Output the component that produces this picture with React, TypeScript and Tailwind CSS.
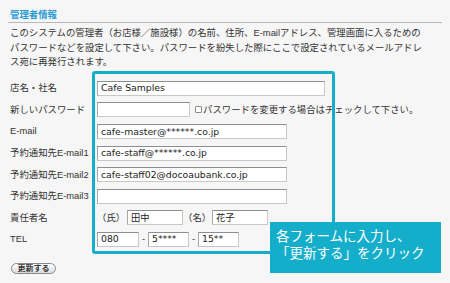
import React from "react";

const JP = "font-['Liberation_Sans','Noto_Sans_CJK_JP',sans-serif]";

function Field({ w, value = "" }: { w: string; value?: string }) {
  return (
    <div
      className={`${w} h-[15px] bg-white border border-[#c8c8c8] border-t-[#8e8e8e] border-l-[#a8a8a8] flex items-center pl-[3px] text-[9.3px] text-[#222] whitespace-nowrap overflow-hidden font-['DejaVu_Sans','Noto_Sans_CJK_JP',sans-serif]`}
    >
      {value}
    </div>
  );
}

function Row({ label, children }: { label: string; children: React.ReactNode }) {
  return (
    <div className="flex items-center h-[21.6px]">
      <div className="w-[87px] shrink-0 whitespace-nowrap">{label}</div>
      <div className="flex items-center">{children}</div>
    </div>
  );
}

export default function App() {
  return (
    <div className={`relative w-[450px] h-[283px] overflow-hidden bg-[#f6f6f6] text-[#333] text-[9.4px] ${JP}`}>
      {/* Header */}
      <h2 className="pl-[10px] pt-[9px] leading-[12px] font-bold text-[#2a9bd4]">管理者情報</h2>
      <div className="mx-[8px] mt-[1px] h-px bg-[#b8b8b8]" />

      <p className="px-[10px] pt-[3px] leading-[14.5px] whitespace-nowrap">
        このシステムの管理者（お店様／施設様）の名前、住所、E-mailアドレス、管理画面に入るための
        <br />
        パスワードなどを設定して下さい。パスワードを紛失した際にここで設定されているメールアドレ
        <br />
        ス宛に再発行されます。
      </p>

      {/* Form */}
      <div className="pl-[10px] mt-[8px]">
        <Row label="店名・社名">
          <Field w="w-[228px]" value="Cafe Samples" />
        </Row>
        <Row label="新しいパスワード">
          <Field w="w-[93px]" />
          <span className="ml-[5px] w-[7px] h-[7px] border border-[#888] bg-white rounded-[1px]" />
          <span className="ml-[1px] whitespace-nowrap">パスワードを変更する場合はチェックして下さい。</span>
        </Row>
        <Row label="E-mail">
          <Field w="w-[190px]" value="cafe-master@******.co.jp" />
        </Row>
        <Row label="予約通知先E-mail1">
          <Field w="w-[190px]" value="cafe-staff@******.co.jp" />
        </Row>
        <Row label="予約通知先E-mail2">
          <Field w="w-[190px]" value="cafe-staff02@docoaubank.co.jp" />
        </Row>
        <Row label="予約通知先E-mail3">
          <Field w="w-[190px]" />
        </Row>
        <Row label="責任者名">
          <span className="w-[30px] whitespace-nowrap">（氏）</span>
          <Field w="w-[56px]" value="田中" />
          <span className="w-[29px] whitespace-nowrap">（名）</span>
          <Field w="w-[56px]" value="花子" />
        </Row>
        <Row label="TEL">
          <Field w="w-[42px]" value="080" />
          <span className="w-[9px] text-center">-</span>
          <Field w="w-[41px]" value="5****" />
          <span className="w-[9px] text-center">-</span>
          <Field w="w-[41px]" value="15**" />
        </Row>
      </div>

      <div className="pl-[11px] mt-[11px]">
        <button className="h-[11px] w-[45px] rounded-full border border-[#8a8a8a] bg-gradient-to-b from-white to-[#dcdcdc] text-[8px] leading-[9px] font-bold text-[#333]">
          更新する
        </button>
      </div>

      {/* Annotation frame */}
      <div className="absolute left-[92px] top-[71px] w-[243px] h-[183px] border-[3px] border-[#14aecb] rounded-[3px]" />

      {/* Callout */}
      <div className="absolute left-[270px] top-[222px] w-[171px] h-[51px] bg-[#14aecb] text-white text-[13.5px] leading-[17px] pt-[6px] pl-[6px] whitespace-nowrap">
        各フォームに入力し、
        <br />
        「更新する」をクリック
      </div>
    </div>
  );
}
